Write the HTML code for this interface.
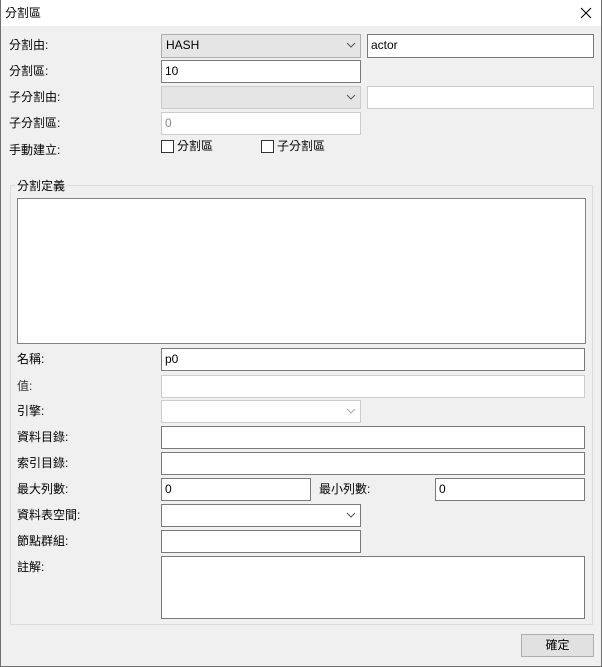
<!DOCTYPE html>
<html><head><meta charset="utf-8"><style>
*{box-sizing:border-box;margin:0;padding:0}
body{width:602px;height:667px;background:#f0f0f0;font-family:"Liberation Sans","Noto Sans CJK TC",sans-serif;font-size:12px;color:#000;position:relative;overflow:hidden}
.win{position:absolute;left:0;top:0;width:602px;height:667px;border:1px solid #6f6f6f;border-top:none}
.title{position:absolute;left:0;top:0;width:602px;height:26px;background:#fff}
.a{position:absolute;white-space:nowrap;line-height:14px}
.in{position:absolute;background:#fff;border:1px solid #7a7a7a;padding:3px 0 0 3px;line-height:14px}
.dis{border-color:#cccccc;color:#8a8a8a}
.cb{position:absolute;background:#e5e5e5;border:1px solid #adadad;padding:3px 0 0 4px;line-height:14px}
.cb.dis{background:#e5e5e5;border-color:#cccccc}
.cw{position:absolute;background:#fff;border:1px solid #7a7a7a}
.cw.dis{border-color:#cccccc}
.arr{position:absolute;right:4px;top:5px}
.chk{position:absolute;width:13px;height:13px;border:1px solid #333;background:#fff}
</style></head><body>
<div class="title"></div>
<div class="win"></div>
<div class="a" style="left:5px;top:6px">分割區</div>
<svg class="a" style="left:580px;top:7px" width="12" height="12"><path d="M1 1L11 11M11 1L1 11" stroke="#000" stroke-width="1.1"/></svg>

<div class="a" style="left:9px;top:38px">分割由:</div>
<div class="cb" style="left:161px;top:34px;width:200px;height:24px">HASH<svg class="arr" width="10" height="10"><path d="M1 3L5 7L9 3" stroke="#555" fill="none"/></svg></div>
<div class="in" style="left:367px;top:34px;width:227px;height:24px">actor</div>

<div class="a" style="left:9px;top:64px">分割區:</div>
<div class="in" style="left:161px;top:60px;width:200px;height:23px">10</div>

<div class="a" style="left:9px;top:90px">子分割由:</div>
<div class="cb dis" style="left:161px;top:86px;width:200px;height:23px"><svg class="arr" width="10" height="10"><path d="M1 3L5 7L9 3" stroke="#555" fill="none"/></svg></div>
<div class="in dis" style="left:367px;top:86px;width:227px;height:23px"></div>

<div class="a" style="left:9px;top:116px">子分割區:</div>
<div class="in dis" style="left:161px;top:112px;width:200px;height:23px">0</div>

<div class="a" style="left:9px;top:143px">手動建立:</div>
<div class="chk" style="left:161px;top:140px"></div><div class="a" style="left:177px;top:139px">分割區</div>
<div class="chk" style="left:261px;top:140px"></div><div class="a" style="left:277px;top:139px">子分割區</div>

<div style="position:absolute;left:10px;top:185px;width:583px;height:440px;border:1px solid #dcdcdc"></div>
<div class="a" style="left:15px;top:179px;background:#f0f0f0;padding:0 2px">分割定義</div>
<div style="position:absolute;left:17px;top:198px;width:569px;height:146px;background:#fff;border:1px solid #828282"></div>

<div class="a" style="left:17px;top:352px">名稱:</div>
<div class="in" style="left:161px;top:348px;width:424px;height:23px">p0</div>
<div class="a" style="left:17px;top:379px;color:#333">值:</div>
<div class="in dis" style="left:161px;top:375px;width:424px;height:23px"></div>
<div class="a" style="left:17px;top:404px">引擎:</div>
<div class="cw dis" style="left:161px;top:400px;width:200px;height:23px"><svg class="arr" width="10" height="10"><path d="M1 3L5 7L9 3" stroke="#aaa" fill="none"/></svg></div>
<div class="a" style="left:17px;top:430px">資料目錄:</div>
<div class="in" style="left:161px;top:426px;width:424px;height:23px"></div>
<div class="a" style="left:17px;top:456px">索引目錄:</div>
<div class="in" style="left:161px;top:452px;width:424px;height:23px"></div>
<div class="a" style="left:17px;top:482px">最大列數:</div>
<div class="in" style="left:161px;top:478px;width:150px;height:23px">0</div>
<div class="a" style="left:319px;top:482px">最小列數:</div>
<div class="in" style="left:435px;top:478px;width:150px;height:23px">0</div>
<div class="a" style="left:17px;top:508px">資料表空間:</div>
<div class="cw" style="left:161px;top:504px;width:200px;height:23px"><svg class="arr" width="10" height="10"><path d="M1 3L5 7L9 3" stroke="#555" fill="none"/></svg></div>
<div class="a" style="left:17px;top:534px">節點群組:</div>
<div class="in" style="left:161px;top:530px;width:200px;height:23px"></div>
<div class="a" style="left:17px;top:560px">註解:</div>
<div class="in" style="left:161px;top:556px;width:424px;height:63px"></div>

<div style="position:absolute;left:521px;top:634px;width:73px;height:23px;background:#e1e1e1;border:1px solid #adadad;text-align:center;line-height:21px">確定</div>
</body></html>
